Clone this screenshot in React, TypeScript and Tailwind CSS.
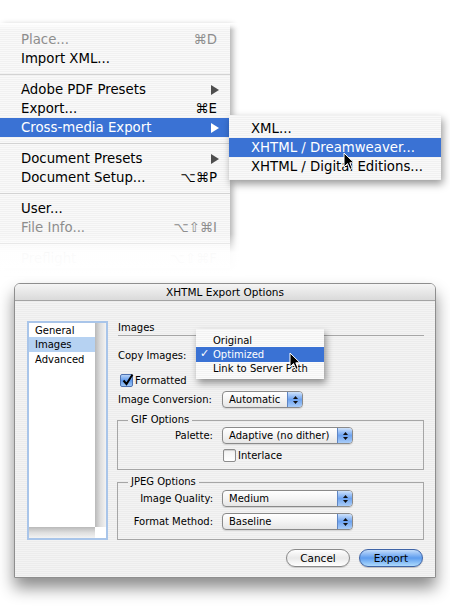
import React from "react";

const FONT = "font-['DejaVu_Sans',sans-serif]";

function Arrow({ white }: { white?: boolean }) {
  return (
    <svg width="8" height="10" viewBox="0 0 8 10" className="mr-[-2px]">
      <path d="M0 0 L8 5 L0 10 Z" fill={white ? "#ffffff" : "#4e4e4e"} />
    </svg>
  );
}

function MenuRow({
  label,
  shortcut,
  arrow,
  disabled,
  active,
  pl = "pl-[21px]",
}: {
  label: string;
  shortcut?: string;
  arrow?: boolean;
  disabled?: boolean;
  active?: boolean;
  pl?: string;
}) {
  const color = active ? "bg-[#3a72d4] text-white" : disabled ? "text-[#8d8d8d]" : "text-black";
  return (
    <div className={`flex h-[19px] items-center justify-between ${pl} pr-[13px] ${color}`}>
      <span>{label}</span>
      {shortcut && <span>{shortcut}</span>}
      {arrow && <Arrow white={active} />}
    </div>
  );
}

function Sep() {
  return (
    <div className="flex h-[12px] items-center">
      <div className="h-px w-full bg-[#d3d3d3]" />
    </div>
  );
}

function Cursor() {
  return (
    <svg width="12" height="19" viewBox="0 0 12 19">
      <path
        d="M1 1 L1 15 L4.5 11.6 L7 17.4 L9.2 16.4 L6.8 10.8 L11 10.8 Z"
        fill="#000"
        stroke="#fff"
        strokeWidth="1"
        strokeLinejoin="round"
      />
    </svg>
  );
}

function Stepper() {
  return (
    <span className="flex w-[15px] flex-col items-center justify-center gap-[2px] border-l border-[#5f86c4] bg-linear-to-b from-[#cfe2fa] via-[#6ea3ef] to-[#a9ccf7]">
      <svg width="5" height="3" viewBox="0 0 5 3">
        <path d="M0 3 L2.5 0 L5 3 Z" fill="#111" />
      </svg>
      <svg width="5" height="3" viewBox="0 0 5 3">
        <path d="M0 0 L2.5 3 L5 0 Z" fill="#111" />
      </svg>
    </span>
  );
}

function Popup({ text, w }: { text: string; w: string }) {
  return (
    <div
      className={`flex h-[17px] ${w} overflow-hidden rounded-[4px] border border-[#8a8a8a] bg-linear-to-b from-white via-[#f4f4f4] to-[#e6e6e6] shadow-[0_1px_1px_rgba(0,0,0,0.12)]`}
    >
      <span className="flex-1 pl-[6px] leading-[15px]">{text}</span>
      <Stepper />
    </div>
  );
}

function CheckOn() {
  return (
    <span className="relative flex h-[13px] w-[13px] items-center justify-center rounded-[2px] border border-[#4f72b0] bg-linear-to-b from-[#b6d2f7] via-[#5f98ea] to-[#9cc6f6]">
      <svg width="12" height="13" viewBox="0 0 12 13" className="absolute left-[1px] top-[-2px]">
        <path d="M1.5 7.5 L4.5 11 L10.5 1.5" fill="none" stroke="#000" strokeWidth="2" />
      </svg>
    </span>
  );
}

function CheckOff() {
  return (
    <span className="block h-[13px] w-[13px] rounded-[2px] border border-[#8c8c8c] bg-linear-to-b from-[#f2f2f2] to-white shadow-[inset_0_1px_1px_rgba(0,0,0,0.15)]" />
  );
}

export default function App() {
  return (
    <div className={`relative h-[612px] w-[450px] overflow-hidden bg-white ${FONT}`}>
      {/* Main menu */}
      <div className="relative mt-[23px] w-[230px] bg-[image:repeating-linear-gradient(180deg,#f1f1f1_0px,#f1f1f1_1px,#f9f9f9_1px,#f9f9f9_2px)] pt-[7px] text-[13.3px] shadow-[3px_2px_6px_rgba(0,0,0,0.3)]">
        <MenuRow label="Place..." shortcut="⌘D" disabled />
        <MenuRow label="Import XML..." />
        <Sep />
        <MenuRow label="Adobe PDF Presets" arrow />
        <MenuRow label="Export..." shortcut="⌘E" />
        <MenuRow label="Cross-media Export" arrow active />
        <Sep />
        <MenuRow label="Document Presets" arrow />
        <MenuRow label="Document Setup..." shortcut="⌥⌘P" />
        <Sep />
        <MenuRow label="User..." />
        <MenuRow label="File Info..." shortcut="⌥⇧⌘I" disabled />
        <Sep />
        <MenuRow label="Preflight" shortcut="⌥⇧⌘F" disabled />
        <div className="pointer-events-none absolute left-0 top-0 h-[7px] w-[240px] bg-linear-to-b from-white to-white/0" />
        <div className="pointer-events-none absolute bottom-[-8px] left-0 h-[42px] w-[245px] bg-linear-to-b from-white/0 via-white/95 via-45% to-white" />
      </div>

      {/* Submenu */}
      <div className="absolute left-[229px] top-[115px] w-[212px] bg-[image:repeating-linear-gradient(180deg,#f1f1f1_0px,#f1f1f1_1px,#f9f9f9_1px,#f9f9f9_2px)] py-[4px] text-[13.3px] shadow-[2px_4px_8px_rgba(0,0,0,0.4)]">
        <MenuRow label="XML..." pl="pl-[22px]" />
        <MenuRow label="XHTML / Dreamweaver..." pl="pl-[22px]" active />
        <MenuRow label="XHTML / Digital Editions..." pl="pl-[22px]" />
      </div>
      <div className="absolute left-[343px] top-[152px]">
        <Cursor />
      </div>

      {/* Dialog */}
      <div className="ml-[14px] mt-[15px] w-[422px] overflow-hidden rounded-t-[6px] border border-[#8e8e8e] text-[10px] text-black shadow-[0_10px_16px_rgba(0,0,0,0.45)]">
        <div className="h-[17px] border-b border-[#a3a3a3] bg-linear-to-b from-[#f5f5f5] to-[#dadada] text-center text-[10.5px] leading-[16px]">
          XHTML Export Options
        </div>
        <div className="bg-[image:repeating-linear-gradient(180deg,#ececec_0px,#ececec_1px,#f3f3f3_1px,#f3f3f3_2px)] pb-[10px] pl-[12px] pr-[11px] pt-[20px]">
          <div className="flex gap-[10px]">
            {/* List box */}
            <div className="grid h-[219px] w-[81px] grid-cols-[66px_11px] grid-rows-[1fr_11px] border-2 border-[#a9c5e9] bg-white">
              <div className="flex flex-col">
                <div className="flex h-[14px] items-center pl-[6px]">General</div>
                <div className="flex h-[15px] items-center bg-[#b6d2f2] pl-[6px]">Images</div>
                <div className="flex h-[14px] items-center pl-[6px]">Advanced</div>
              </div>
              <div className="bg-linear-to-r from-[#b9b9b9] via-[#dedede] to-[#f3f3f3]" />
              <div className="bg-linear-to-b from-[#b9b9b9] via-[#dedede] to-[#f3f3f3]" />
              <div className="bg-white" />
            </div>

            {/* Right column */}
            <div className="flex w-[306px] flex-col">
              <div className="h-[15px] border-b border-[#a6a6a6] leading-[13px]">Images</div>
              <div className="mt-[10px] flex h-[18px] items-center">Copy Images:</div>
              <div className="mt-[8px] flex h-[16px] items-center gap-[2px] pl-[2px]">
                <CheckOn />
                <span>Formatted</span>
              </div>
              <div className="mt-[3px] flex h-[17px] items-center">
                <span className="w-[95px]">Image Conversion:</span>
                <div className="ml-[9px]">
                  <Popup text="Automatic" w="w-[81px]" />
                </div>
              </div>

              <fieldset className="ml-[-1px] mt-[6px] w-[307px] border border-[#a6a6a6] pb-[7px]">
                <legend className="ml-[10px] px-[3px] leading-[12px]">GIF Options</legend>
                <div className="mt-[1px] flex h-[17px] items-center">
                  <span className="w-[95px] text-right">Palette:</span>
                  <div className="ml-[9px]">
                    <Popup text="Adaptive (no dither)" w="w-[131px]" />
                  </div>
                </div>
                <div className="mt-[5px] flex h-[13px] items-center gap-[2px] pl-[105px]">
                  <CheckOff />
                  <span>Interlace</span>
                </div>
              </fieldset>

              <fieldset className="ml-[-1px] mt-[6px] w-[307px] border border-[#a6a6a6] pb-[9px]">
                <legend className="ml-[10px] px-[3px] leading-[12px]">JPEG Options</legend>
                <div className="mt-[2px] flex h-[17px] items-center">
                  <span className="w-[95px] text-right">Image Quality:</span>
                  <div className="ml-[9px]">
                    <Popup text="Medium" w="w-[131px]" />
                  </div>
                </div>
                <div className="mt-[6px] flex h-[17px] items-center">
                  <span className="w-[95px] text-right">Format Method:</span>
                  <div className="ml-[9px]">
                    <Popup text="Baseline" w="w-[131px]" />
                  </div>
                </div>
              </fieldset>
            </div>
          </div>

          <div className="mt-[9px] flex justify-end gap-[9px] pr-[1px]">
            <button className="h-[18px] w-[64px] rounded-full border border-[#8a8a8a] bg-linear-to-b from-white via-[#e9e9e9] to-white text-[10.5px] leading-[16px] shadow-[0_1px_1px_rgba(0,0,0,0.15)]">
              Cancel
            </button>
            <button className="h-[18px] w-[64px] rounded-full border border-[#3f64a6] bg-linear-to-b from-[#c3dcfa] via-[#5d9cee] to-[#aedafc] text-[10.5px] leading-[16px] shadow-[0_1px_1px_rgba(0,0,0,0.2)]">
              Export
            </button>
          </div>
        </div>
      </div>

      {/* Open popup menu for Copy Images */}
      <div className="absolute left-[196px] top-[329px] w-[128px] bg-[image:repeating-linear-gradient(180deg,#f3f3f3_0px,#f3f3f3_1px,#fbfbfb_1px,#fbfbfb_2px)] pb-[3px] pt-[4px] text-[10px] shadow-[2px_4px_7px_rgba(0,0,0,0.4)]">
        <div className="flex h-[14px] items-center pl-[17px]">Original</div>
        <div className="flex h-[14.5px] items-center bg-[#3a72d4] text-white">
          <span className="w-[17px] pl-[4px] text-[11px]">✓</span>
          <span>Optimized</span>
        </div>
        <div className="flex h-[14px] items-center pl-[17px]">Link to Server Path</div>
      </div>
      <div className="absolute left-[289px] top-[352px]">
        <Cursor />
      </div>
    </div>
  );
}
